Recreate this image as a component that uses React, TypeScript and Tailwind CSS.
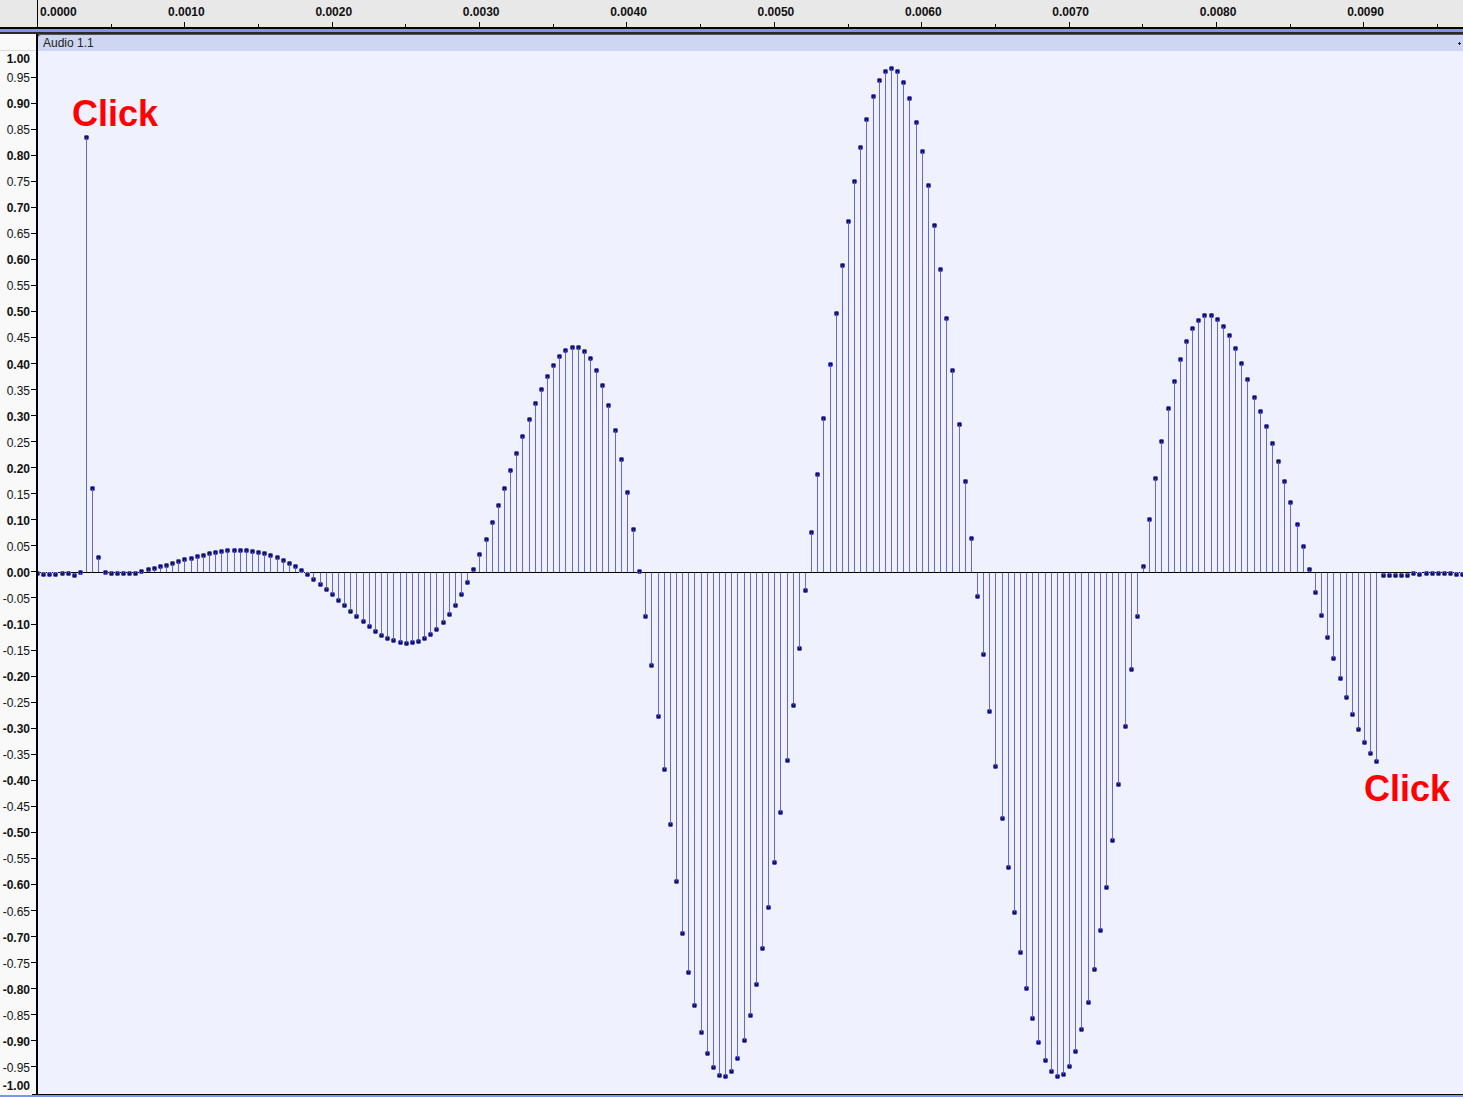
import React from "react";

const P: number[] = [
37,573,43,574,49,574,55,574,62,573,68,573,74,575,80,572,86,137,92,488,98,557,105,572,111,573,117,573,123,573,129,573,135,573,141,571,148,569,154,568,160,566,166,565,172,563,178,561,184,559,191,558,197,556,203,555,209,553,215,552,221,551,227,550,234,550,240,550,246,550,252,551,258,552,264,553,270,555,
277,557,283,560,289,563,295,566,301,570,307,574,313,579,320,584,326,589,332,594,338,600,344,605,350,611,356,616,363,621,369,626,375,631,381,635,387,638,393,640,400,642,406,643,412,642,418,641,424,638,430,634,436,629,443,622,449,614,455,605,461,594,467,582,
473,569,479,554,486,539,492,522,498,505,504,488,510,470,516,453,522,436,529,419,535,403,541,389,547,376,553,365,559,356,565,350,572,347,578,347,584,351,590,358,596,370,602,385,608,405,615,430,621,459,627,492,633,529,639,571,
645,616,651,665,658,716,664,769,670,824,676,881,682,933,688,972,694,1005,701,1032,707,1053,713,1067,719,1075,725,1076,731,1071,737,1058,744,1040,750,1015,756,984,762,948,768,907,774,862,780,812,787,760,793,705,799,648,805,590,
811,532,817,474,823,418,830,364,836,313,842,265,848,221,854,181,860,147,866,119,873,96,879,80,885,71,891,68,897,71,903,82,909,98,916,122,922,151,928,185,934,225,940,269,946,318,952,370,959,424,965,481,971,538,
977,596,983,654,989,711,995,766,1002,818,1008,867,1014,912,1020,952,1026,988,1032,1018,1038,1042,1045,1060,1051,1071,1057,1076,1063,1074,1069,1066,1075,1051,1081,1029,1088,1002,1094,969,1100,930,1106,887,1112,840,1118,784,1125,726,1131,669,1137,616,
1143,566,1149,519,1155,478,1161,441,1168,408,1174,381,1180,359,1186,341,1192,328,1198,320,1204,315,1211,315,1217,319,1223,326,1229,335,1235,348,1241,363,1247,379,1254,397,1260,411,1266,426,1272,443,1278,461,1284,481,1290,502,1297,524,1303,546,1309,569,
1315,592,1321,615,1327,637,1333,658,1340,678,1346,697,1352,714,1358,729,1364,742,1370,753,1376,761,1383,575,1389,575,1395,575,1401,575,1407,575,1413,573,1419,574,1426,573,1432,573,1438,573,1444,573,1450,573,1456,574,1462,574,
];

const BASE = 572;
const samples: { x: number; y: number }[] = [];
for (let i = 0; i < P.length; i += 2) samples.push({ x: P[i], y: P[i + 1] });

const lines = samples
  .filter((s) => s.y !== BASE)
  .map((s) =>
    s.y < BASE
      ? `M${s.x} ${s.y}h1V${BASE}h-1z`
      : `M${s.x} ${BASE}h1V${s.y}h-1z`
  )
  .join("");

const dotCorners = samples.map((s) => `M${s.x - 2} ${s.y - 2}h5v5h-5z`).join("");

const dotOuter = samples
  .map((s) => `M${s.x - 1} ${s.y - 2}h3v1h1v3h-1v1h-3v-1h-1v-3h1z`)
  .join("");

const dotInner = samples
  .map((s) =>
    s.y <= BASE
      ? `M${s.x - 1} ${s.y - 1}h3v3h-1v-1h-1v1h-1z`
      : `M${s.x - 1} ${s.y - 1}h1v1h1v-1h1v3h-3z`
  )
  .join("");

const yLabels: string[] = [];
for (let i = 20; i >= -20; i--) {
  const v = (Math.abs(i) * 5) / 100;
  yLabels.push((i < 0 ? "-" : "") + v.toFixed(2));
}

const timeLabels = ["0.0010", "0.0020", "0.0030", "0.0040", "0.0050", "0.0060", "0.0070", "0.0080", "0.0090"];

function Tick({ className }: { className: string }) {
  return <div className={`absolute bottom-0 w-px bg-black ${className}`} />;
}

export default function App() {
  return (
    <div className="w-[1463px] h-[1097px] overflow-hidden flex flex-col bg-[#f9f9f9] font-['Liberation_Sans',Arial,sans-serif] text-[12px] leading-none text-[#111]">
      {/* time ruler */}
      <div className="h-[27px] flex bg-[#e8e8e8] shrink-0">
        <div className="w-[38px] border-r border-black shrink-0" />
        <div className="relative w-[130px] shrink-0 pl-[2px] pt-[6px] font-bold">
          0.0000
          <Tick className="left-[72.7px] h-[3px]" />
        </div>
        {timeLabels.map((t) => (
          <div key={t} className="relative w-[147.4px] shrink-0 pt-[6px] font-bold">
            {t}
            <Tick className="left-[16.3px] h-[5px]" />
            <Tick className="left-[90px] h-[3px]" />
          </div>
        ))}
      </div>
      <div className="h-[2px] bg-black shrink-0" />
      <div className="h-[3px] bg-[#8094ee] shrink-0" />
      <div className="h-[2px] bg-[#2a2a2a] shrink-0" />

      {/* body */}
      <div className="flex h-[1060px] shrink-0">
        <div className="w-[36px] shrink-0 flex flex-col">
          <div className="h-[17px] border-b border-[#dddddd] shrink-0" />
          {yLabels.map((l, i) => {
            const edge = i === 0 || i === yLabels.length - 1;
            const last = i === yLabels.length - 1;
            return (
              <div
                key={l}
                className={`flex items-center justify-end shrink-0 ${edge ? "h-[13px]" : "h-[26.05px]"} ${i % 2 === 0 ? "font-bold" : "font-normal"}`}
              >
                <span className={last ? "translate-y-0" : "translate-y-px"}>{l}</span>
                <span className={`w-[5px] h-px ml-px shrink-0 ${edge ? "" : "bg-black"}`} />
              </div>
            );
          })}
        </div>
        <div className="w-[2px] bg-black shrink-0" />
        <div className="flex-1 flex flex-col bg-[#2a2a2a] relative">
          <div className="h-px bg-[#555555] shrink-0" />
          <div className="h-[16px] bg-[#cfd6f2] rounded-tl-[3px] flex items-center justify-between pl-[5px] pr-[2px] shrink-0 text-[#222]">
            <span>Audio 1.1</span>
            <svg width="3" height="3" viewBox="0 0 3 3" className="block" shapeRendering="crispEdges">
              <path d="M1 0h1v1h1v1H2v1H1V2H0V1h1z" fill="#222" />
            </svg>
          </div>
          <div className="relative h-[1043px] bg-[#eff1fe] shrink-0">
            <svg
              width="1425"
              height="1043"
              viewBox="38 51 1425 1043"
              className="block"
              shapeRendering="crispEdges"
            >
              <path d={lines} fill="#6666dd" />
              <rect x="38" y={BASE} width="1425" height="1" fill="#000" />
              <path d={dotCorners} fill="#b4b4ee" />
              <path d={dotOuter} fill="#5050cc" />
              <path d={dotInner} fill="#15154f" />
            </svg>
            <span className="absolute left-[34px] top-[45px] text-[36px] leading-none font-bold text-[#ff0000]">Click</span>
            <span className="absolute left-[1326px] top-[720px] text-[36px] leading-none font-bold text-[#ff0000]">Click</span>
          </div>
        </div>
      </div>
      <div className="h-px bg-black ml-[32px] shrink-0" />
      <div className="h-[2px] bg-[#8094ee] shrink-0" />
    </div>
  );
}
